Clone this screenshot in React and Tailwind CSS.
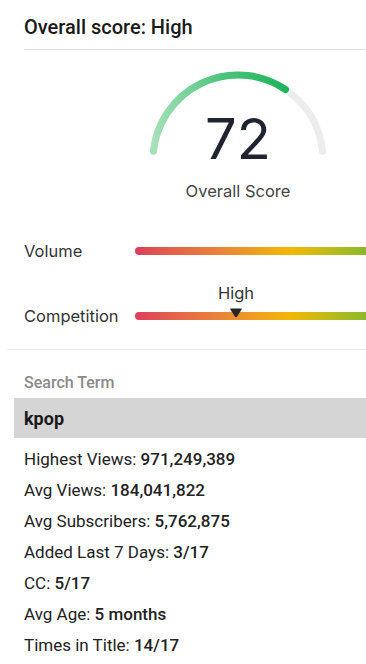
import React from 'react';

const stats = [
  ['Highest Views:', '971,249,389'],
  ['Avg Views:', '184,041,822'],
  ['Avg Subscribers:', '5,762,875'],
  ['Added Last 7 Days:', '3/17'],
  ['CC:', '5/17'],
  ['Avg Age:', '5 months'],
  ['Times in Title:', '14/17'],
];

const barGradient =
  'bg-[linear-gradient(90deg,#dc3f5c_0%,#e4604a_14%,#e9823a_32%,#efa21c_48%,#f3b704_60%,#b9bb1c_76%,#86b82a_90%,#74b42e_100%)]';

const Gauge = () => (
  <div className="relative ml-[138px] mt-[10px] w-[200px]">
    <svg width="200" height="100" viewBox="0 0 200 100">
      <defs>
        <linearGradient id="g" x1="15" y1="0" x2="150" y2="0" gradientUnits="userSpaceOnUse">
          <stop offset="0" stopColor="#a6e0b9" />
          <stop offset="0.5" stopColor="#4cc57c" />
          <stop offset="1" stopColor="#1cb35a" />
        </linearGradient>
      </defs>
      <path d="M 15.47 91.12 A 85 85 0 0 1 184.53 91.12" fill="none" stroke="#ececec" strokeWidth="7" strokeLinecap="round" />
      <path d="M 15.47 91.12 A 85 85 0 0 1 147.5 29.5" fill="none" stroke="url(#g)" strokeWidth="7" strokeLinecap="round" />
    </svg>
    {/* number over the arc */}
    <div className="absolute inset-x-0 top-[51px] flex justify-center font-['Inter',sans-serif] text-[56px] leading-none text-[#1f2430]">
      72
    </div>
    <div className="mt-[21px] text-center font-['Inter',sans-serif] text-[16.5px] leading-5 text-[#444]">
      Overall Score
    </div>
  </div>
);

export default function App() {
  return (
    <div className="h-[664px] w-[366px] overflow-hidden bg-white font-['Roboto',sans-serif]">
      <div className="ml-6 border-b border-[#dcdcdc] pt-[15px] pb-[10px]">
        <h1 className="text-[20px] font-medium leading-6 text-[#1a1a1a]">Overall score: High</h1>
      </div>

      <Gauge />

      {/* --- VOLUME --- */}
      <div className="mt-[40px] flex h-5 items-center pl-6 font-['Inter',sans-serif]">
        <span className="w-[111px] shrink-0 text-[16.5px] text-[#333]">Volume</span>
        <div className={`h-2 w-[260px] shrink-0 rounded-full ${barGradient}`} />
      </div>

      {/* --- COMPETITION --- */}
      <div className="mt-[45px] flex h-5 items-center pl-6 font-['Inter',sans-serif]">
        <span className="w-[111px] shrink-0 text-[16.5px] text-[#333]">Competition</span>
        <div className={`relative h-2 w-[260px] shrink-0 rounded-full ${barGradient}`}>
          <span className="absolute bottom-[17px] left-[101px] -translate-x-1/2 text-[16.5px] leading-5 text-[#333]">
            High
          </span>
          <svg className="absolute -top-[4px] left-[94px]" width="14" height="10" viewBox="0 0 13 10">
            <path d="M1.5 0.5 H11.5 Q12.8 0.5 12 1.8 L7.6 8.6 Q6.5 10 5.4 8.6 L1 1.8 Q0.2 0.5 1.5 0.5 Z" fill="#262626" />
          </svg>
        </div>
      </div>

      <div className="ml-[7px] mt-[23px] border-t border-[#ececec]" />

      {/* --- SEARCH TERM --- */}
      <div className="mt-[24px] pl-6 text-[16px] font-medium leading-[18px] text-[#8a8a8a]">Search Term</div>
      <div className="ml-[14px] mt-[6px] flex h-10 items-center bg-[#d5d5d5] pl-[10px] text-[18px] font-bold text-[#1a1a1a]">
        kpop
      </div>

      <div className="mt-[6px] pl-6">
        {stats.map(([label, value]) => (
          <div key={label} className="h-[31px] text-[17px] leading-[31px] text-[#222]">
            {label} <span className="font-medium">{value}</span>
          </div>
        ))}
      </div>
    </div>
  );
}
